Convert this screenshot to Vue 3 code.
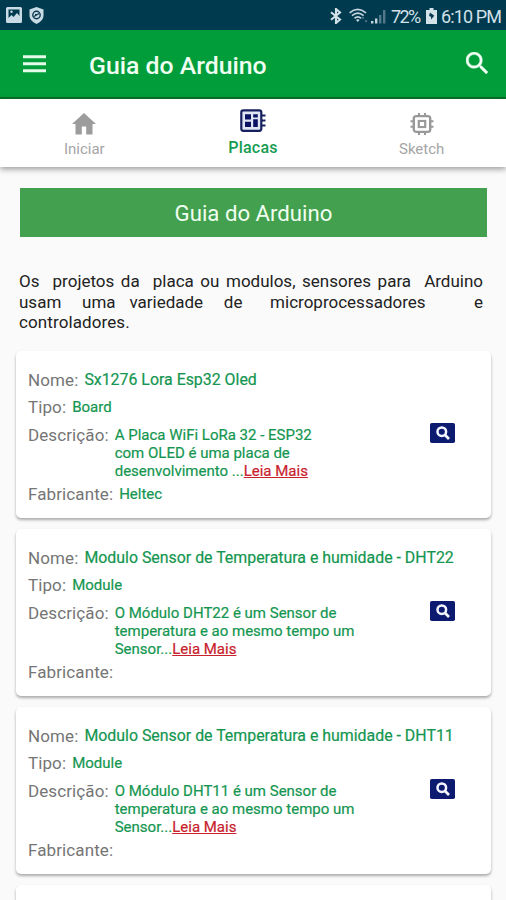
<script setup>
import { ref } from 'vue'

const activeTab = ref('placas')

const tabs = [
  { id: 'iniciar', label: 'Iniciar' },
  { id: 'placas', label: 'Placas' },
  { id: 'sketch', label: 'Sketch' }
]

// Intro text, the original spacing is kept
const intro = [
  'Os  projetos da  placa ou modulos, sensores para  Arduino',
  'usam   uma  variedade   de    microprocessadores       e',
  'controladores.'
]

const boards = [
  {
    id: 1,
    nome: 'Sx1276 Lora Esp32 Oled',
    tipo: 'Board',
    descricao: ['A Placa WiFi LoRa 32 - ESP32', 'com OLED é uma placa de', 'desenvolvimento ...'],
    fabricante: 'Heltec'
  },
  {
    id: 2,
    nome: 'Modulo Sensor de Temperatura e humidade - DHT22',
    tipo: 'Module',
    descricao: ['O Módulo DHT22 é um Sensor de', 'temperatura e ao mesmo tempo um', 'Sensor...'],
    fabricante: ''
  },
  {
    id: 3,
    nome: 'Modulo Sensor de Temperatura e humidade - DHT11',
    tipo: 'Module',
    descricao: ['O Módulo DHT11 é um Sensor de', 'temperatura e ao mesmo tempo um', 'Sensor...'],
    fabricante: ''
  }
]
</script>

<template>
  <div class="screen">
    <div class="status-bar">
      <div class="status-left">
        <svg width="16" height="16" viewBox="0 0 16 16">
          <path fill="#c9dce6" fill-rule="evenodd" d="M1.500 0h13Q16 0 16 1.500v13q0 1.500-1.500 1.500h-13Q0 16 0 14.500v-13Q0 0 1.500 0zM2.500 2.500V11l3-3 2 2 3.500-4 2.500 3V2.500z" />
          <circle cx="5.500" cy="4.800" r="1.200" fill="#c9dce6" />
        </svg>
        <svg width="15" height="17" viewBox="0 0 15 17">
          <path fill="#c9dce6" d="M7.500 0L14.500 2.500V8.500q0 5.500-7 8.500-7-3-7-8.500V2.500z" />
          <circle cx="7.500" cy="8" r="3.700" fill="none" stroke="#0b3a50" stroke-width="1.400" />
          <path d="M5 9.500l5-3M6 7.500h3" stroke="#0b3a50" stroke-width="1.200" />
        </svg>
      </div>
      <div class="status-right">
        <svg class="bt" width="12" height="16" viewBox="0 0 12 16">
          <path d="M1 4.200l9 7.300L6 15V1l4 3.500-9 7.300" fill="none" stroke="#d3e1e8" stroke-width="2.100" />
        </svg>
        <svg class="wifi" width="20" height="16" viewBox="0 0 20 16">
          <g fill="none" stroke="#c3d4dc" stroke-width="1.700">
            <path d="M.6 4.800q8-6.800 16.400 0" />
            <path d="M3 7.600q5.800-4.800 11.600 0" />
            <path d="M5.500 10.300q3.300-2.800 6.600 0" />
          </g>
          <path fill="#c3d4dc" d="M7 12l1.800-1 1.800 1-1.800 2z" />
          <path fill="#6b8795" d="M12.500 10.500l1.500-2 1.500 2zM15.500 12.500h3l-1.500 2z" />
        </svg>
        <svg class="signal" width="15" height="15" viewBox="0 0 15 15">
          <path fill="#c3d4dc" d="M0 12h2.400v2.500H0zM4 9.500h2.400v5H4z" />
          <path fill="#54788b" d="M8 6h2.400v8.500H8zM12 1h2.400v13.500H12z" />
        </svg>
        <span class="percent">72%</span>
        <svg class="battery" width="11" height="16" viewBox="0 0 11 16">
          <path fill="#d3e1e8" d="M3.500 0h4v2H11v14H0V2h3.500z" />
          <path fill="#0b3a50" d="M4 4.500l4.300 3.200-3.300 3.800v-2.800L3 8z" />
        </svg>
        <span class="clock">6:10 PM</span>
      </div>
    </div>

    <header class="app-bar">
      <svg class="menu" width="23" height="18" viewBox="0 0 23 18">
        <path fill="#e3fbe7" d="M0 .3h23v3H0zM0 7.300h23v3H0zM0 14.200h23v3H0z" />
      </svg>
      <h1>Guia do Arduino</h1>
      <svg class="search" width="22" height="22" viewBox="3 3 17.500 17.500">
        <path fill="#f2fff4" stroke="#f2fff4" stroke-width=".3" d="M15.500 14h-.79l-.28-.27C15.410 12.590 16 11.110 16 9.500 16 5.910 13.090 3 9.500 3S3 5.910 3 9.500 5.910 16 9.500 16c1.610 0 3.090-.59 4.230-1.570l.27.28v.79l5 4.990L20.490 19l-4.990-5zm-6 0C7.010 14 5 11.990 5 9.500S7.010 5 9.500 5 14 7.010 14 9.500 11.990 14 9.500 14z" />
      </svg>
    </header>

    <nav class="tabs">
      <div
        v-for="tab in tabs"
        :key="tab.id"
        class="tab"
        :class="{ active: activeTab === tab.id }"
        @click="activeTab = tab.id"
      >
        <svg v-if="tab.id === 'iniciar'" width="26" height="22" viewBox="0 0 26 22">
          <path fill="#9c9c9c" d="M13 0L1 11h3.500v10.500h6.300v-8h4.400v8h6.300V11H25z" />
        </svg>
        <svg v-else-if="tab.id === 'placas'" width="26" height="24" viewBox="0 0 26 24">
          <rect x="1.300" y="1.300" width="20" height="20.500" rx="2" fill="#dfe5f5" stroke="#17205f" stroke-width="2.200" />
          <path fill="#0b1262" d="M5 5.300h6v5.200H5zM5 12.700h6v5.200H5zM13.200 5.300h4.600v3.200h-4.600zM13.200 10.200h4.600v7.700h-4.600z" />
          <path stroke="#17205f" stroke-width="2.200" d="M21 6.500h4.500M21 11.500h4.500M21 16.500h4.500" />
        </svg>
        <svg v-else width="24" height="22" viewBox="0 0 24 23" preserveAspectRatio="none">
          <rect x="3.800" y="3.300" width="16.400" height="16.400" rx="2.500" fill="none" stroke="#999" stroke-width="2.400" />
          <rect x="8.800" y="8.300" width="6.400" height="6.400" fill="none" stroke="#999" stroke-width="2.200" />
          <path stroke="#999" stroke-width="2.100" d="M9 0v3M15 0v3M9 20v3M15 20v3M.5 8.500H3.500M.5 14.500H3.500M20.500 8.500h3M20.500 14.500h3" />
        </svg>
        <span>{{ tab.label }}</span>
      </div>
    </nav>

    <main>
      <div class="banner">Guia do Arduino</div>

      <div class="intro">
        <p v-for="(line, i) in intro" :key="i" :class="{ last: i === intro.length - 1 }">{{ line }}</p>
      </div>

      <div class="card-list">
        <article v-for="board in boards" :key="board.id" class="card">
          <div class="row nome">
            <span class="label">Nome:</span>
            <span class="value">{{ board.nome }}</span>
          </div>
          <div class="row tipo">
            <span class="label">Tipo:</span>
            <span class="value">{{ board.tipo }}</span>
          </div>
          <div class="row descricao">
            <span class="label">Descrição:</span>
            <div class="value">
              <div v-for="(line, i) in board.descricao" :key="i">
                {{ line }}<a v-if="i === board.descricao.length - 1">Leia Mais</a>
              </div>
            </div>
            <svg class="open" width="25" height="20" viewBox="0 0 25 20">
              <rect width="25" height="20" rx="1.800" fill="#0c1b70" />
              <circle cx="11.800" cy="8.700" r="4.300" fill="none" stroke="#f4f6ff" stroke-width="2.500" />
              <path d="M14.800 11.800l4.200 4.200" stroke="#f4f6ff" stroke-width="2.700" />
            </svg>
          </div>
          <div class="row fabricante">
            <span class="label">Fabricante:</span>
            <span class="value">{{ board.fabricante }}</span>
          </div>
        </article>
        <article class="card"></article>
      </div>
    </main>
  </div>
</template>

<style>
body {
  margin: 0;
  overflow: hidden;
}
</style>

<style scoped>
.screen {
  display: flex;
  flex-direction: column;
  width: 506px;
  height: 900px;
  overflow: hidden;
  background: #fafafa;
  font-family: Roboto, Arial, sans-serif;
}

/* status bar */
.status-bar {
  flex: none;
  display: flex;
  justify-content: space-between;
  height: 30px;
  padding: 0 5px 0 6px;
  background: #003a4f;
  color: #d3e1e8;
}

.status-left,
.status-right {
  display: flex;
  align-items: center;
}

.status-left {
  gap: 7px;
}

.status-right {
  padding-top: 2px;
  font-size: 18px;
  white-space: nowrap;
}

.wifi {
  margin-left: 7px;
}

.signal {
  margin-left: 2px;
}

.percent {
  margin-left: 5px;
  width: 29px;
  letter-spacing: -1.6px;
}

.battery {
  margin-left: 6px;
}

.clock {
  margin-left: 4px;
  letter-spacing: -0.9px;
}

/* app bar */
.app-bar {
  flex: none;
  display: flex;
  align-items: center;
  box-sizing: border-box;
  height: 69px;
  padding: 0 18px 0 23px;
  background: #029d3b;
  border-bottom: 2px solid #087327;
}

.app-bar .menu {
  margin-top: 1px;
}

.app-bar h1 {
  flex: 1;
  margin: 4px 0 0 43px;
  font-size: 24.800px;
  font-weight: 500;
  line-height: 30px;
  color: #effff1;
}

.search {
  margin-bottom: 1px;
}

/* tabs */
.tabs {
  flex: none;
  display: flex;
  height: 68px;
  background: #fff;
  box-shadow: 0 2px 6px rgba(0, 0, 0, 0.4);
}

.tab {
  flex: 1;
  display: flex;
  flex-direction: column;
  align-items: center;
  padding-top: 14px;
  font-size: 15px;
  line-height: 18px;
  color: #a5a5a5;
}

.tab span {
  margin-top: 5px;
}

.tab.active {
  padding-top: 10px;
  font-size: 16px;
  font-weight: 500;
  color: #159c51;
}

.tab.active span {
  margin-top: 6px;
  letter-spacing: 0.2px;
}

/* content */
main {
  padding: 21px 15px 0 16px;
}

.banner {
  height: 49px;
  margin: 0 4px 0 4px;
  background: #43a04e;
  color: #f0fff0;
  font-size: 22.200px;
  line-height: 51px;
  text-align: center;
}

.intro {
  margin: 34px 8px 0 3px;
  font-size: 17px;
  line-height: 20.500px;
  color: #222;
}

.intro p {
  margin: 0;
  white-space: pre-wrap;
  text-align: justify;
  text-align-last: justify;
}

.intro p.last {
  text-align-last: left;
  letter-spacing: 0.100px;
}

.card-list {
  display: flex;
  flex-direction: column;
  gap: 11px;
  margin-top: 18px;
}

.card {
  box-sizing: border-box;
  height: 167px;
  padding: 15px 12px 0;
  background: #fff;
  border-radius: 5px;
  box-shadow: 0 2px 3px rgba(0, 0, 0, 0.32);
}

.row {
  display: flex;
  height: 27.500px;
  line-height: 28px;
  font-size: 15px;
  white-space: nowrap;
}

.label {
  margin-right: 6px;
  font-size: 17px;
  letter-spacing: 0.100px;
  color: #757575;
}

.value {
  color: #149650;
  -webkit-text-stroke: 0.2px #149650;
}

.row.nome .value {
  font-size: 15.900px;
}

.row.descricao {
  height: 59.500px;
}

.row.descricao .value {
  width: 315px;
  padding-top: 5px;
  line-height: 18px;
}

.row.descricao a {
  color: #c8202c;
  text-decoration: underline;
  -webkit-text-stroke-color: #c8202c;
}

.open {
  margin-top: 2px;
}
</style>
